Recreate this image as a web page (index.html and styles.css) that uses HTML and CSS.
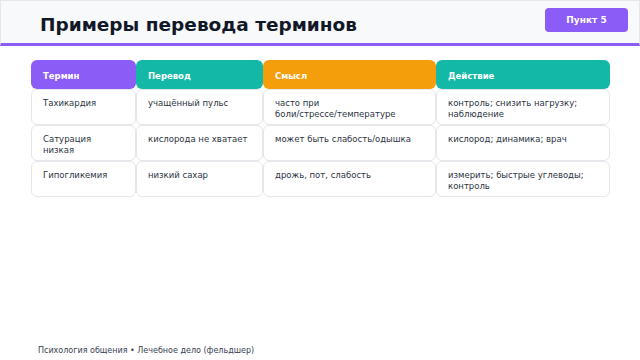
FILE: index.html
```html
<!DOCTYPE html>
<html lang="ru">
<head>
<meta charset="utf-8">
<link rel="stylesheet" href="styles.css">
</head>
<body>
<div class="slide">
  <header class="top">
    <h1 class="title">Примеры перевода терминов</h1>
    <span class="badge">Пункт 5</span>
  </header>
  <main class="content">
    <div class="table">
      <div class="th c-purple">Термин</div>
      <div class="th c-teal">Перевод</div>
      <div class="th c-orange">Смысл</div>
      <div class="th c-teal">Действие</div>

      <div class="td">Тахикардия</div>
      <div class="td">учащённый пульс</div>
      <div class="td">часто при <span class="nowrap">боли/стрессе/температуре</span></div>
      <div class="td">контроль; снизить нагрузку; наблюдение</div>

      <div class="td">Сатурация низкая</div>
      <div class="td">кислорода не хватает</div>
      <div class="td">может быть <span class="nowrap">слабость/одышка</span></div>
      <div class="td">кислород; динамика; врач</div>

      <div class="td">Гипогликемия</div>
      <div class="td">низкий сахар</div>
      <div class="td">дрожь, пот, слабость</div>
      <div class="td">измерить; быстрые углеводы; контроль</div>
    </div>
  </main>
  <footer class="foot">Психология общения • Лечебное дело (фельдшер)</footer>
</div>
</body>
</html>
```

FILE: styles.css
```css
html, body {
  margin: 0;
  padding: 0;
  background: #ffffff;
}
body {
  font-family: "DejaVu Sans", sans-serif;
  color: #1f2937;
}
.slide {
  width: 640px;
  height: 360px;
  display: flex;
  flex-direction: column;
  box-sizing: border-box;
}
.top {
  height: 46px;
  box-sizing: border-box;
  background: #f8f9fb;
  border: 1px solid #e5e7eb;
  border-bottom: 3px solid #8b5cf6;
  display: flex;
  align-items: flex-start;
  justify-content: space-between;
  padding: 0 11px 0 39px;
}
.title {
  margin: 13px 0 0 0;
  font-size: 18.5px;
  line-height: 21px;
  font-weight: bold;
  color: #111827;
}
.badge {
  margin-top: 7px;
  width: 83px;
  height: 24px;
  background: #8b5cf6;
  color: #ffffff;
  border-radius: 4px;
  font-size: 9px;
  font-weight: bold;
  display: flex;
  align-items: center;
  justify-content: center;
}
.content {
  flex: 1;
  padding: 14px 30px 0 31px;
}
.table {
  display: grid;
  grid-template-columns: 105px 127px 173px 174px;
  grid-template-rows: 29px 36px 36px 36px;
}
.th, .td {
  font-size: 8.5px;
  line-height: 11px;
  border-radius: 6px;
  box-sizing: border-box;
  padding: 0 10px 0 12px;
}
.th {
  color: #ffffff;
  font-weight: bold;
  display: flex;
  align-items: center;
  padding-top: 3px;
}
.td {
  background: #ffffff;
  border: 1px solid #e5e7eb;
  padding-top: 8px;
  padding-left: 11px;
  padding-right: 14px;
  color: #2b3441;
}
.nowrap { white-space: nowrap; }
.c-purple { background: #8b5cf6; }
.c-teal { background: #14b8a6; }
.c-orange { background: #f59e0b; }
.foot {
  font-size: 8px;
  color: #374151;
  padding: 0 0 5px 38px;
}
```
